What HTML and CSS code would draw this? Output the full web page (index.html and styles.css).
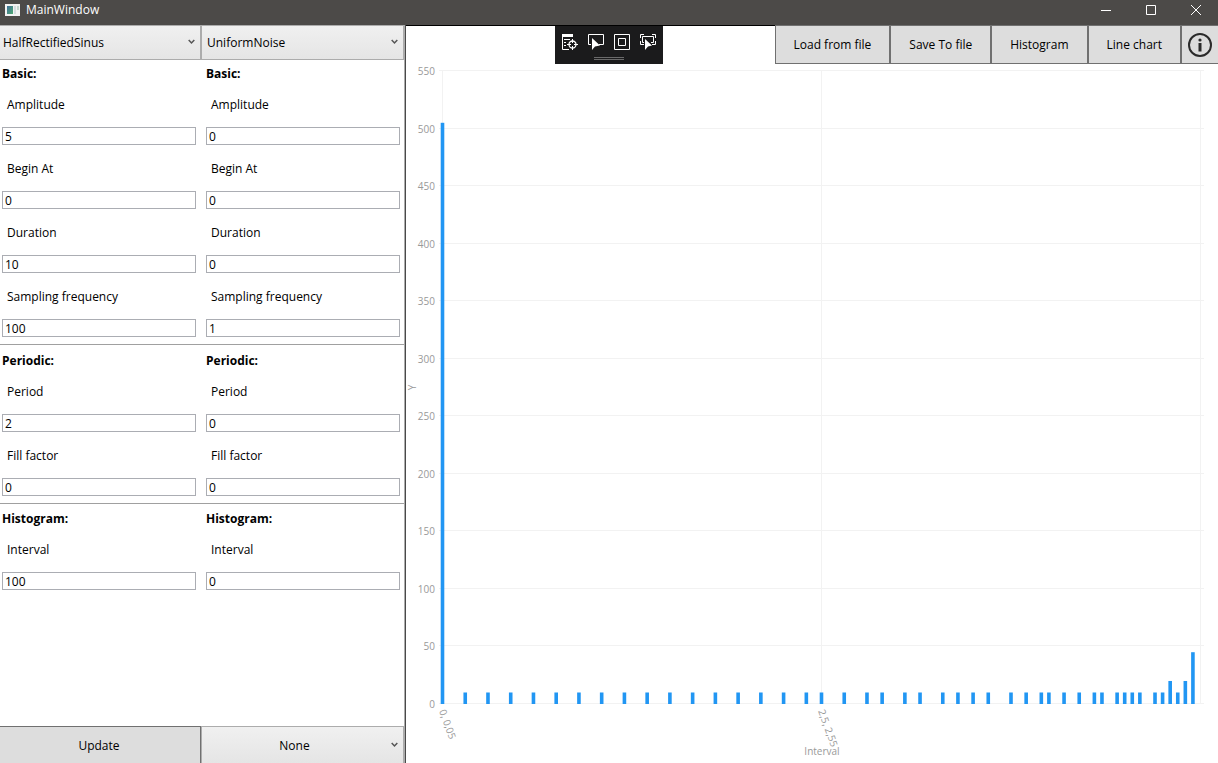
FILE: index.html
```html
<!DOCTYPE html>
<html lang="en">
<head>
<meta charset="utf-8">
<title>MainWindow</title>
<link rel="stylesheet" href="styles.css">
</head>
<body>
<div class="window">
  <header class="titlebar">
    <svg class="app-icon" width="16" height="14" viewBox="0 0 16 14" aria-hidden="true">
      <defs><linearGradient id="pane" x1="0" y1="0" x2="1" y2="1"><stop offset="0" stop-color="#3f6f9a"/><stop offset="1" stop-color="#4fa870"/></linearGradient></defs>
      <rect x="0" y="1" width="15" height="12" fill="#f2f2f2"/>
      <rect x="2" y="3" width="6" height="8" fill="url(#pane)"/>
      <rect x="9" y="3" width="2" height="8" fill="#d5dde0"/>
      <rect x="12" y="3" width="2" height="4" fill="#c4d6cf"/>
    </svg>
    <h1 class="title">MainWindow</h1>
    <div class="window-controls">
      <button class="window-button" aria-label="Minimize"><svg width="12" height="12" viewBox="0 0 12 12"><path d="M1 6.5h10"/></svg></button>
      <button class="window-button" aria-label="Maximize"><svg width="12" height="12" viewBox="0 0 12 12"><path d="M1.500 1.500h9v9h-9z"/></svg></button>
      <button class="window-button" aria-label="Close"><svg width="12" height="12" viewBox="0 0 12 12"><path d="M1 1l10 10M11 1L1 11"/></svg></button>
    </div>
  </header>

  <div class="content">
    <aside class="sidebar">
      <div class="split">
        <div class="combo">
          <select class="combo-select" aria-label="First signal"><option>HalfRectifiedSinus</option></select>
          <svg class="chevron" width="7" height="6" viewBox="0 0 7 6"><path d="M.7 1l2.800 3 2.800-3"/></svg>
        </div>
        <div class="combo">
          <select class="combo-select" aria-label="Second signal"><option>UniformNoise</option></select>
          <svg class="chevron" width="7" height="6" viewBox="0 0 7 6"><path d="M.7 1l2.800 3 2.800-3"/></svg>
        </div>
      </div>

      <form class="parameters">
        <section class="group">
          <div class="column">
            <h2 class="group-title">Basic:</h2>
            <div class="field"><label for="a-amp">Amplitude</label><input id="a-amp" type="text" value="5"></div>
            <div class="field"><label for="a-begin">Begin At</label><input id="a-begin" type="text" value="0"></div>
            <div class="field"><label for="a-dur">Duration</label><input id="a-dur" type="text" value="10"></div>
            <div class="field"><label for="a-freq">Sampling frequency</label><input id="a-freq" type="text" value="100"></div>
          </div>
          <div class="column">
            <h2 class="group-title">Basic:</h2>
            <div class="field"><label for="b-amp">Amplitude</label><input id="b-amp" type="text" value="0"></div>
            <div class="field"><label for="b-begin">Begin At</label><input id="b-begin" type="text" value="0"></div>
            <div class="field"><label for="b-dur">Duration</label><input id="b-dur" type="text" value="0"></div>
            <div class="field"><label for="b-freq">Sampling frequency</label><input id="b-freq" type="text" value="1"></div>
          </div>
        </section>
        <section class="group">
          <div class="column">
            <h2 class="group-title">Periodic:</h2>
            <div class="field"><label for="a-period">Period</label><input id="a-period" type="text" value="2"></div>
            <div class="field"><label for="a-fill">Fill factor</label><input id="a-fill" type="text" value="0"></div>
          </div>
          <div class="column">
            <h2 class="group-title">Periodic:</h2>
            <div class="field"><label for="b-period">Period</label><input id="b-period" type="text" value="0"></div>
            <div class="field"><label for="b-fill">Fill factor</label><input id="b-fill" type="text" value="0"></div>
          </div>
        </section>
        <section class="group">
          <div class="column">
            <h2 class="group-title">Histogram:</h2>
            <div class="field"><label for="a-int">Interval</label><input id="a-int" type="text" value="100"></div>
          </div>
          <div class="column">
            <h2 class="group-title">Histogram:</h2>
            <div class="field"><label for="b-int">Interval</label><input id="b-int" type="text" value="0"></div>
          </div>
        </section>
      </form>

      <div class="split">
        <button class="action update">Update</button>
        <div class="combo">
          <select class="combo-select centered" aria-label="Operation"><option>None</option></select>
          <svg class="chevron" width="7" height="6" viewBox="0 0 7 6"><path d="M.7 1l2.800 3 2.800-3"/></svg>
        </div>
      </div>
    </aside>

    <main class="main">
      <div class="toolbar">
        <button class="action">Load from file</button>
        <button class="action">Save To file</button>
        <button class="action">Histogram</button>
        <button class="action">Line chart</button>
        <button class="action info" aria-label="Information">
          <svg width="24" height="24" viewBox="0 0 24 24"><circle cx="12" cy="12" r="11" fill="none" stroke="#2b2b2b" stroke-width="2"/><circle cx="12" cy="7" r="1.600" fill="#2b2b2b"/><path d="M12 10v8.500" stroke="#2b2b2b" stroke-width="3"/></svg>
        </button>
      </div>
      <div class="chart"><svg id="plot" class="plot" role="img" aria-label="Histogram"></svg></div>
    </main>
  </div>

  <div class="debug-bar">
    <div class="debug-tools">
      <button class="debug-button" aria-label="Go to live visual tree">
        <svg width="16" height="16" viewBox="0 0 16 16" fill="none" stroke="#fff"><path d="M0 0h11v3H0z" fill="#fff" stroke="none"/><path d="M.5 2v13.500H7M2 5.500h6M2 8.500h2M2 11.500h2"/><circle cx="10.500" cy="10.500" r="3.500" stroke-width="1.300"/><path d="M10.500 5v4M10.500 12v4M5 10.500h4M12 10.500h4"/></svg>
      </button>
      <button class="debug-button" aria-label="Select element">
        <svg width="16" height="16" viewBox="0 0 16 16"><path d="M3 10.500H.5V.5h15v10H11" fill="none" stroke="#fff"/><path d="M4 4v12l3-3.500 5-1z" fill="#fff"/></svg>
      </button>
      <button class="debug-button" aria-label="Display layout adorners">
        <svg width="16" height="16" viewBox="0 0 16 16" fill="none" stroke="#fff"><path d="M.5.5h15v15H.5zM4.500 4.500h7v7h-7z"/></svg>
      </button>
      <button class="debug-button" aria-label="Track focused element">
        <svg width="16" height="16" viewBox="0 0 16 16"><path d="M.5 4V.5H4M12 .5h3.500V4M15.500 7v3.500H12M.5 7v3.500H4M4 8.500H2.500v-6h11v6H11" fill="none" stroke="#fff"/><path d="M5 5v11l3-3.500 4-1z" fill="#fff"/></svg>
      </button>
    </div>
    <div class="grip"></div>
  </div>
</div>
<script src="chart.js"></script>
</body>
</html>
```

FILE: styles.css
```css
* {
  box-sizing: border-box;
}

body {
  margin: 0;
  background: #fff;
  color: #000;
}

body,
button,
input,
select {
  font-family: "Open Sans", "Noto Sans", sans-serif;
  font-size: 12px;
}

button {
  margin: 0;
  padding: 0;
  border: 0;
  background: none;
}

.window {
  position: relative;
  display: flex;
  flex-direction: column;
  height: 100vh;
  overflow: hidden;
}

/* Title bar */
.titlebar {
  display: flex;
  align-items: center;
  gap: 5px;
  height: 25px;
  padding: 0 0 6px 5px;
  background: #4c4a48;
  color: #fff;
}

.title {
  flex: 1;
  margin: 0;
  font-size: 12px;
  font-weight: 400;
}

.window-controls {
  display: flex;
}

.window-button {
  display: grid;
  place-items: center;
  width: 45px;
}

.window-button path {
  fill: none;
  stroke: #fff;
}

.content {
  flex: 1;
  display: grid;
  grid-template-columns: minmax(0, 1fr) minmax(0, 2fr);
  min-height: 0;
}

/* Sidebar */
.sidebar {
  display: flex;
  flex-direction: column;
  border-right: 1px solid #4a4a4a;
  box-shadow: inset -1px 0 #acacac;
  padding-right: 1px;
}

.split {
  display: grid;
  grid-template-columns: 201fr 203fr;
}

.combo {
  position: relative;
}

.combo-select {
  display: block;
  appearance: none;
  width: 100%;
  height: 35px;
  padding: 0 20px 0 5px;
  border: 1px solid #acacac;
  border-radius: 0;
  background: linear-gradient(#f0f0f0, #e5e5e5);
  color: #000;
}

.combo:first-child .combo-select {
  padding-left: 3px;
  border-left: 0;
}

.combo-select.centered {
  height: 37px;
  padding-left: 4px;
  border-bottom: 0;
  text-align: center;
  text-align-last: center;
}

.chevron {
  position: absolute;
  top: 14px;
  right: 6px;
  pointer-events: none;
}

.centered + .chevron {
  top: 16px;
}

.chevron path {
  fill: none;
  stroke: #555;
  stroke-width: 1.5;
}

.parameters {
  flex: 1;
}

.group {
  display: grid;
  grid-template-columns: 1fr 1fr;
  gap: 10px;
  padding: 2px 4px 7px 2px;
  border-bottom: 1px solid #a0a0a0;
}

.group:first-child {
  padding-top: 0;
}

.group:last-child {
  padding-top: 1px;
  border-bottom: 0;
}

.column {
  display: flex;
  flex-direction: column;
  min-width: 0;
}

.group-title {
  margin: 0 0 2px;
  font-size: 12px;
  font-weight: 700;
  line-height: 27px;
}

.field {
  display: flex;
  flex-direction: column;
  gap: 6px;
}

.field + .field {
  margin-top: 8px;
}

.field label {
  padding-left: 5px;
  line-height: 32px;
}

.field input {
  width: 100%;
  height: 18px;
  padding: 0 2px;
  border: 1px solid #abadb3;
  border-radius: 0;
  background: #fff;
  color: #000;
}

/* Buttons */
.action {
  border: 1px solid #707070;
  background: #ddd;
  color: #000;
}

.update {
  border-left: 0;
  border-bottom: 0;
  padding-right: 2px;
}

.main {
  display: flex;
  flex-direction: column;
  min-height: 0;
}

.toolbar {
  display: flex;
  justify-content: flex-end;
  height: 39px;
  box-shadow: inset 0 1px #000;
}

.toolbar .action {
  padding: 0 18px;
}

.toolbar .info {
  display: grid;
  place-items: center;
  padding: 0 6px;
  border-right: 0;
}

/* Chart */
.chart {
  flex: 1;
  min-height: 0;
}

.plot {
  display: block;
  width: 100%;
  height: 100%;
  overflow: visible;
  font-size: 10px;
  fill: #999;
}

.grid-line {
  stroke: #f2f2f2;
}

.bar {
  fill: #2196f3;
}

/* Floating debug bar */
.debug-bar {
  position: absolute;
  top: 26px;
  left: 50%;
  display: flex;
  flex-direction: column;
  align-items: center;
  gap: 7px;
  height: 38px;
  padding: 8px 7px 0;
  background: #1b1b1c;
  transform: translateX(-50%);
}

.debug-tools {
  display: flex;
  gap: 10px;
}

.debug-button svg {
  display: block;
}

.grip {
  width: 30px;
  height: 3px;
  border: solid #6a6a6a;
  border-width: 1px 0;
}
```

FILE: chart.js
```js
const counts = { 0: 505, 96: 20, 98: 20, 99: 45 };
[3, 6, 9, 12, 15, 18, 21, 24, 27, 30, 33, 36, 39, 42, 45, 48, 50, 53, 56, 58, 61, 63, 66, 68,
  70, 72, 75, 77, 79, 80, 82, 84, 86, 87, 89, 90, 91, 92, 94, 95, 97].forEach(bin => { counts[bin] = 10; });

const xLabels = { 0: "0, 0,05", 50: "2,5, 2,55" };
const maxCount = 550;
const binCount = 100;
const margin = { top: 7, right: 17, bottom: 59, left: 37 };
const plot = document.getElementById("plot");

function add(tag, attributes, text) {
  const node = document.createElementNS("http://www.w3.org/2000/svg", tag);
  for (const name in attributes) node.setAttribute(name, attributes[name]);
  if (text !== undefined) node.textContent = text;
  plot.appendChild(node);
}

function draw() {
  plot.replaceChildren();
  const { width, height } = plot.getBoundingClientRect();
  const right = width - margin.right;
  const base = height - margin.bottom;
  const x = bin => margin.left + (right - margin.left) * bin / binCount;
  const y = count => base - (base - margin.top) * count / maxCount;

  for (let count = 0; count <= maxCount; count += 50) {
    const row = Math.round(y(count)) - 0.5;
    add("line", { class: "grid-line", x1: margin.left - 4, x2: right + 3, y1: row, y2: row });
    add("text", { x: margin.left - 8, y: row + 4, "text-anchor": "end" }, count);
  }
  for (const bin of [0, 50, 100]) {
    const column = Math.round(x(bin)) - 0.5;
    add("line", { class: "grid-line", x1: column, x2: column, y1: margin.top, y2: base });
  }
  for (const bin in counts) {
    add("rect", { class: "bar", x: x(bin) - 2.3, y: y(counts[bin]), width: 3.6, height: base - y(counts[bin]) });
  }
  for (const bin in xLabels) {
    add("text", { transform: `translate(${x(bin) - 4} ${base + 7}) rotate(70)` }, xLabels[bin]);
  }
  add("text", { x: x(50), y: height - 8, "text-anchor": "middle" }, "Interval");
  add("text", { transform: `translate(10 ${(margin.top + base) / 2}) rotate(-90)`, "text-anchor": "middle" }, "Y");
}

draw();
window.addEventListener("resize", draw);
```
